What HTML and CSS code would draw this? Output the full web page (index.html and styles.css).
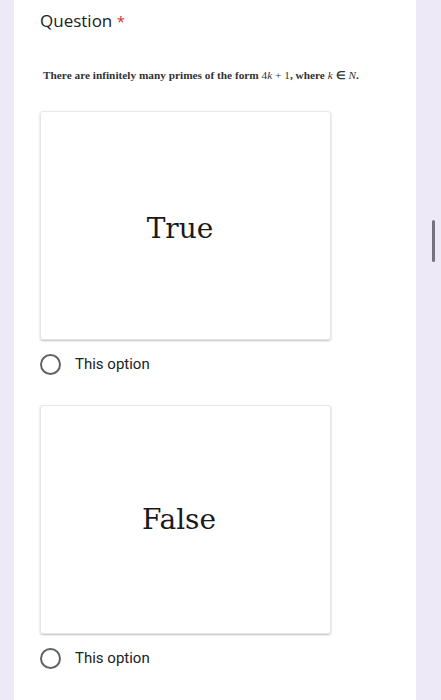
FILE: index.html
```html
<!DOCTYPE html>
<html>
<head>
<meta charset="utf-8">
<link rel="stylesheet" href="styles.css">
</head>
<body>
<div class="page">
  <div class="card">
    <div class="title">Question <span class="req">*</span></div>
    <div class="statement">There are infinitely many primes of the form <span class="math">4<i>k</i> + 1</span>, where <i>k</i> ∈ <i>N</i>.</div>
    <div class="option">
      <div class="img-box"><span class="img-text">True</span></div>
      <label class="choice"><span class="radio"></span><span class="choice-text">This option</span></label>
    </div>
    <div class="option">
      <div class="img-box"><span class="img-text">False</span></div>
      <label class="choice"><span class="radio"></span><span class="choice-text">This option</span></label>
    </div>
  </div>
  <div class="scrollbar"></div>
</div>
</body>
</html>
```
FILE: styles.css
```css
html, body {
  margin: 0;
  padding: 0;
  height: 100%;
  overflow: hidden;
  background: #ede9f6;
}
.page {
  position: relative;
  height: 700px;
  display: flex;
}
.card {
  margin-left: 14px;
  width: 402px;
  background: #ffffff;
  padding: 9px 0 0 26px;
  box-sizing: border-box;
  height: 700px;
}
.title {
  font-family: "Open Sans", Roboto, sans-serif;
  font-size: 17px;
  color: #202124;
  line-height: 24px;
}
.req {
  color: #d93025;
  font-size: 15px;
}
.statement {
  margin-top: 35px;
  margin-left: 3px;
  font-family: "Liberation Serif", serif;
  font-size: 11.3px;
  font-weight: bold;
  color: #333;
  line-height: 14px;
}
.statement .math, .statement i {
  font-weight: normal;
}
.option {
  display: flex;
  flex-direction: column;
}
.img-box {
  margin-top: 29px;
  width: 291px;
  height: 229px;
  box-sizing: border-box;
  padding: 5px 11px 0 0;
  border: 1px solid #e6e6e6;
  border-radius: 3px;
  box-shadow: 0 1px 2px rgba(0,0,0,0.25);
  display: flex;
  align-items: center;
  justify-content: center;
}
.option + .option .img-box { margin-top: 30px; padding: 0 13px 0 0; }
.img-text {
  font-family: "DejaVu Serif", serif;
  font-size: 28px;
  color: #1a1a1a;
}
.choice {
  display: flex;
  align-items: center;
  margin-top: 13px;
  height: 22px;
}
.radio {
  width: 17px;
  height: 17px;
  border: 2px solid #5f6368;
  border-radius: 50%;
  flex: none;
}
.choice-text {
  margin-left: 14px;
  font-family: Roboto, sans-serif;
  font-size: 15px;
  color: #202124;
}
.scrollbar {
  position: absolute;
  left: 432px;
  top: 220px;
  width: 3px;
  height: 42px;
  border-radius: 2px;
  background: #75737d;
}
```
